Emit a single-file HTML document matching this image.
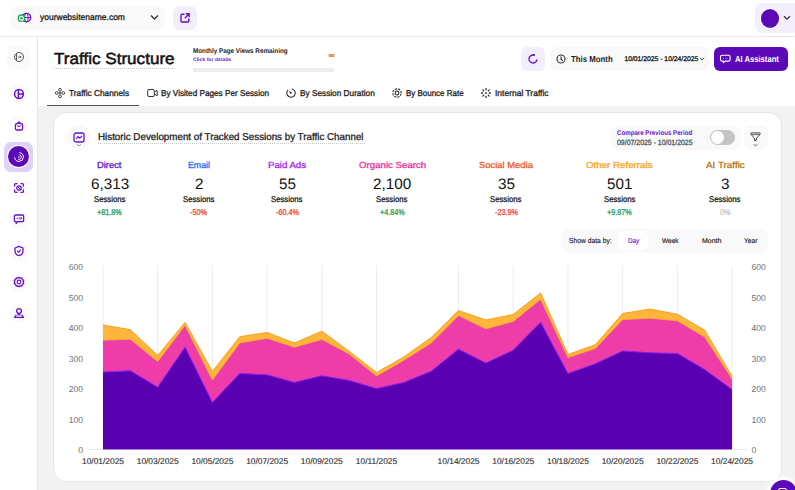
<!DOCTYPE html>
<html><head><meta charset="utf-8">
<style>
*{margin:0;padding:0;box-sizing:border-box}
html,body{width:795px;height:490px;overflow:hidden;background:#fff;font-family:"Liberation Sans",sans-serif;color:#1a1a1a;text-rendering:geometricPrecision}
.a{position:absolute}
.t{position:absolute;white-space:nowrap;line-height:1}
.m{-webkit-text-stroke:0.3px currentColor}
.m2{-webkit-text-stroke:0.15px currentColor}
.m3{-webkit-text-stroke:0.5px currentColor}
</style></head><body>
<!-- top header -->
<div class="a" style="left:0;top:0;width:795px;height:37px;background:#fff;border-bottom:1px solid #e9e9e9"></div>
<div class="a" style="left:10px;top:6px;width:155px;height:24px;border-radius:7px;background:#f9f9f9"></div>
<svg class="a" style="left:17px;top:11px" width="16" height="14" viewBox="0 0 16 14">
 <circle cx="9.4" cy="6.6" r="4.3" fill="#fff" stroke="#6a12c9" stroke-width="1.3"/>
 <ellipse cx="9.4" cy="6.6" rx="1.8" ry="4.3" fill="none" stroke="#6a12c9" stroke-width="1"/>
 <path d="M5.1 6.6H13.7" stroke="#6a12c9" stroke-width="1"/>
 <circle cx="4.4" cy="7.2" r="3.2" fill="#fff" stroke="#1fa85a" stroke-width="1.3"/>
 <circle cx="4.4" cy="7.2" r="1.3" fill="#1fa85a"/>
</svg>
<svg class="a" style="left:150px;top:14px" width="9" height="7" viewBox="0 0 9 7"><path d="M1 1.5L4.5 5L8 1.5" fill="none" stroke="#333" stroke-width="1.4"/></svg>
<div class="a" style="left:173px;top:6px;width:24px;height:24px;border-radius:7px;background:#f3eefc"></div>
<svg class="a" style="left:179px;top:12px" width="12" height="12" viewBox="0 0 12 12"><path d="M5 2.2H3.2A1.2 1.2 0 0 0 2 3.4V8.8A1.2 1.2 0 0 0 3.2 10H8.6A1.2 1.2 0 0 0 9.8 8.8V7M6.2 5.8L10 2M7.2 1.8H10.2V4.8" fill="none" stroke="#6a12c9" stroke-width="1.4" stroke-linecap="round" stroke-linejoin="round"/></svg>
<div class="a" style="left:755px;top:3px;width:45px;height:30px;border-radius:8px;background:#f3eefc"></div>
<div class="a" style="left:759.6px;top:7.8px;width:20.8px;height:20.8px;border-radius:50%;background:#fff"></div>
<div class="a" style="left:760.6px;top:8.8px;width:18.8px;height:18.8px;border-radius:50%;background:#5a0bb5"></div>
<svg class="a" style="left:783px;top:15px" width="8" height="6" viewBox="0 0 8 6"><path d="M1 1.2L4 4.2L7 1.2" fill="none" stroke="#333" stroke-width="1.3"/></svg>

<!-- sidebar -->
<div class="a" style="left:37px;top:36px;width:1px;height:454px;background:#e6e6e6"></div>
<div class="a" style="left:6.5px;top:45.5px;width:24px;height:24px;border-radius:7px;background:#fafafa"></div>
<svg class="a" style="left:13px;top:51.4px" width="12" height="12" viewBox="0 0 12 12"><circle cx="6" cy="6" r="4.5" fill="none" stroke="#555" stroke-width="1"/><path d="M3.55 2.3V9.7" stroke="#555" stroke-width="1"/><path d="M5 6H8.2M6.9 4.8L8.2 6L6.9 7.2" fill="none" stroke="#555" stroke-width=".9"/></svg>
<div class="a" style="left:8.5px;top:83.6px;width:20px;height:20px;border-radius:50%;background:#fafafa"></div>
<svg class="a" style="left:12.5px;top:87.6px" width="12" height="12" viewBox="0 0 12 12"><circle cx="6" cy="6" r="4.4" fill="none" stroke="#6a12c9" stroke-width="1.5"/><path d="M5.4 1.6V10.4M5.4 6H10.4" stroke="#6a12c9" stroke-width="1.5"/></svg>
<div class="a" style="left:8.5px;top:115.7px;width:20px;height:20px;border-radius:50%;background:#fafafa"></div>
<svg class="a" style="left:12.5px;top:119.7px" width="12" height="12" viewBox="0 0 12 12"><path d="M2.4 5.6Q2.4 3.4 4.6 3.3H7.4Q9.6 3.4 9.6 5.6V8.6A1.4 1.4 0 0 1 8.2 10H3.8A1.4 1.4 0 0 1 2.4 8.6Z" fill="none" stroke="#6a12c9" stroke-width="1.3" stroke-linejoin="round"/><path d="M4.9 3.3Q5 1.9 6 1.9Q7 1.9 7.1 3.3M4.6 5.9Q6 6.9 7.4 5.9" fill="none" stroke="#6a12c9" stroke-width="1.1" stroke-linecap="round"/></svg>
<div class="a" style="left:3.5px;top:141.5px;width:29.5px;height:30.5px;border-radius:7px;background:#ded0f7"></div>
<div class="a" style="left:7.3px;top:144.9px;width:23px;height:23px;border-radius:50%;background:#fff"></div>
<div class="a" style="left:8.1px;top:145.70000000000002px;width:21.4px;height:21.4px;border-radius:50%;background:#5c08b8"></div>
<svg class="a" style="left:12.7px;top:150.6px" width="12" height="12" viewBox="0 0 12 12"><path d="M6.76 1.67A4.4 4.4 0 1 1 1.67 6.76M6.82 3.74A2.4 2.4 0 0 1 5.58 8.36" fill="none" stroke="#fff" stroke-width="1" stroke-linecap="round"/><circle cx="5.9" cy="6" r=".75" fill="#fff"/></svg>
<div class="a" style="left:8.5px;top:177.9px;width:20px;height:20px;border-radius:50%;background:#fafafa"></div>
<svg class="a" style="left:12.5px;top:181.9px" width="12" height="12" viewBox="0 0 12 12"><path d="M1.6 4V2.6A1 1 0 0 1 2.6 1.6H4M8 1.6H9.4A1 1 0 0 1 10.4 2.6V4M10.4 8V9.4A1 1 0 0 1 9.4 10.4H8M4 10.4H2.6A1 1 0 0 1 1.6 9.4V8" fill="none" stroke="#6a12c9" stroke-width="1.3" stroke-linecap="round"/><circle cx="6" cy="6" r="2.2" fill="none" stroke="#6a12c9" stroke-width="1.3"/><path d="M5 5L7 7" stroke="#6a12c9" stroke-width="1"/></svg>
<div class="a" style="left:8.5px;top:208.6px;width:20px;height:20px;border-radius:50%;background:#fafafa"></div>
<svg class="a" style="left:12.5px;top:212.6px" width="12" height="12" viewBox="0 0 12 12"><path d="M2.6 2H9.4A1.2 1.2 0 0 1 10.6 3.2V7.4A1.2 1.2 0 0 1 9.4 8.6H5L3.2 10.2V8.6H2.6A1.2 1.2 0 0 1 1.4 7.4V3.2A1.2 1.2 0 0 1 2.6 2Z" fill="none" stroke="#6a12c9" stroke-width="1.3" stroke-linejoin="round"/><path d="M3.6 5.3H5.4M7 4V6.6M8.4 4.4V6.2" stroke="#6a12c9" stroke-width="1"/></svg>
<div class="a" style="left:8.5px;top:241.2px;width:20px;height:20px;border-radius:50%;background:#fafafa"></div>
<svg class="a" style="left:12.5px;top:245.2px" width="12" height="12" viewBox="0 0 12 12"><path d="M6 1.4L10 3V6A5 5 0 0 1 6 10.6A5 5 0 0 1 2 6V3Z" fill="none" stroke="#6a12c9" stroke-width="1.3" stroke-linejoin="round"/><path d="M4.2 5.8L5.6 7.1L7.9 4.7" fill="none" stroke="#6a12c9" stroke-width="1.2"/></svg>
<div class="a" style="left:8.5px;top:272.4px;width:20px;height:20px;border-radius:50%;background:#fafafa"></div>
<svg class="a" style="left:12.5px;top:276.4px" width="12" height="12" viewBox="0 0 12 12"><path d="M6 1.2L7.2 2.2L8.8 2L9.3 3.5L10.7 4.4L10.2 6L10.7 7.6L9.3 8.5L8.8 10L7.2 9.8L6 10.8L4.8 9.8L3.2 10L2.7 8.5L1.3 7.6L1.8 6L1.3 4.4L2.7 3.5L3.2 2L4.8 2.2Z" fill="none" stroke="#6a12c9" stroke-width="1.3" stroke-linejoin="round"/><circle cx="6" cy="6" r="1.8" fill="none" stroke="#6a12c9" stroke-width="1.2"/></svg>
<div class="a" style="left:8.5px;top:303.1px;width:20px;height:20px;border-radius:50%;background:#fafafa"></div>
<svg class="a" style="left:12.5px;top:307.1px" width="12" height="12" viewBox="0 0 12 12"><circle cx="6" cy="4" r="2.4" fill="none" stroke="#6a12c9" stroke-width="1.3"/><path d="M6 6.6L4.6 8.4M6 6.6L7.4 8.4M3.4 7.8L1.6 10.4H10.4L8.6 7.8" fill="none" stroke="#6a12c9" stroke-width="1.3" stroke-linejoin="round"/></svg>

<!-- main gray area -->
<div class="a" style="left:38px;top:106px;width:757px;height:384px;background:#f2f2f2"></div>

<!-- title -->
<div class="a" style="left:54px;top:68px;width:121px;height:0;border-top:1px dotted #c8c8c8"></div>
<div class="a" style="left:193px;top:67.5px;width:141px;height:4.3px;background:#ececec;border-radius:1px"></div>

<!-- right buttons -->
<div class="a" style="left:521px;top:47px;width:24px;height:24px;border-radius:6px;background:#f3eefc"></div>
<svg class="a" style="left:527px;top:53.3px" width="12" height="12" viewBox="0 0 12 12"><path d="M9.9 6.9A4 4 0 1 1 6.69 2.06" fill="none" stroke="#6a12c9" stroke-width="1.4" stroke-linecap="round"/><circle cx="6.9" cy="2.0" r="1.05" fill="#5a0bb8"/></svg>
<div class="a" style="left:550px;top:47px;width:159px;height:24px;border-radius:7px;background:#f9f9f9"></div>
<svg class="a" style="left:556px;top:54px" width="10" height="10" viewBox="0 0 10 10"><circle cx="5" cy="5" r="4" fill="none" stroke="#333" stroke-width="1.1"/><path d="M5 2.8V5.2L6.5 6.5" fill="none" stroke="#333" stroke-width="1.1" stroke-linecap="round"/></svg>
<svg class="a" style="left:699px;top:57px" width="6" height="4" viewBox="0 0 6 4"><path d="M.8 .8L3 3L5.2 .8" fill="none" stroke="#333" stroke-width=".9"/></svg>
<div class="a" style="left:714px;top:47px;width:74px;height:24px;border-radius:6px;background:#5c08b8"></div>
<svg class="a" style="left:719px;top:54px" width="12" height="10" viewBox="0 0 12 10"><path d="M3 1.3H9.6A1.5 1.5 0 0 1 11.1 2.8V5.6A1.5 1.5 0 0 1 9.6 7.1H6.2L4.5 8.6L4.3 7.1H3A1.5 1.5 0 0 1 1.5 5.6V2.8A1.5 1.5 0 0 1 3 1.3Z" fill="none" stroke="#fff" stroke-width="1.1" stroke-linejoin="round"/><circle cx="4.6" cy="4.3" r=".45" fill="#fff"/><circle cx="6.3" cy="4.3" r=".45" fill="#fff"/><circle cx="8" cy="4.3" r=".45" fill="#fff"/></svg>

<!-- tabs -->
<svg class="a" style="left:54.5px;top:88px" width="10" height="10" viewBox="0 0 10 10"><circle cx="5" cy="1.8" r="1.4" fill="none" stroke="#333" stroke-width=".9"/><circle cx="5" cy="8.2" r="1.4" fill="none" stroke="#333" stroke-width=".9"/><circle cx="1.8" cy="5" r="1.4" fill="none" stroke="#333" stroke-width=".9"/><circle cx="8.2" cy="5" r="1.4" fill="none" stroke="#333" stroke-width=".9"/><circle cx="5" cy="5" r="1" fill="#333"/></svg>
<div class="a" style="left:47px;top:104.5px;width:92px;height:1.2px;background:#555"></div>
<svg class="a" style="left:147px;top:88px" width="11" height="10" viewBox="0 0 11 10"><rect x=".7" y="1.5" width="6.6" height="7" rx="1.3" fill="none" stroke="#333" stroke-width="1"/><path d="M7.3 4L10.2 2.4V7.6L7.3 6" fill="none" stroke="#333" stroke-width="1"/></svg>
<svg class="a" style="left:286px;top:88px" width="10" height="10" viewBox="0 0 10 10"><path d="M6.09 .94A4.2 4.2 0 1 1 1.78 2.3" fill="none" stroke="#333" stroke-width="1.1" stroke-linecap="round"/><path d="M3.1 3.1L6.2 4.5L4.5 6.2Z" fill="#333"/></svg>
<svg class="a" style="left:391.5px;top:88px" width="10" height="10" viewBox="0 0 10 10"><circle cx="5" cy="5" r="4.2" fill="none" stroke="#333" stroke-width="1.15" stroke-dasharray="2.3 1" stroke-dashoffset="-0.5"/><circle cx="5" cy="5" r="1.9" fill="none" stroke="#333" stroke-width="1.1"/></svg>
<svg class="a" style="left:480.8px;top:87.8px" width="10" height="10" viewBox="0 0 10 10"><path d="M8.30 5.00L9.40 5.00M7.33 7.33L8.11 8.11M5.00 8.30L5.00 9.40M2.67 7.33L1.89 8.11M1.70 5.00L0.60 5.00M2.67 2.67L1.89 1.89M5.00 1.70L5.00 0.60M7.33 2.67L8.11 1.89" stroke="#333" stroke-width="1.35" stroke-linecap="round"/><circle cx="5" cy="5" r="0.9" fill="#333"/></svg>

<!-- card -->
<div class="a" style="left:53px;top:112px;width:728.5px;height:369.5px;background:#fff;border-radius:13px;border:1px solid #e6e6e6"></div>
<div class="a" style="left:67px;top:125px;width:24px;height:24px;border-radius:50%;background:#f9f9f9"></div>
<svg class="a" style="left:73px;top:132px" width="12" height="16" viewBox="0 0 12 16"><rect x="1" y="1" width="10" height="9" rx="2" fill="none" stroke="#6a12c9" stroke-width="1.3"/><path d="M3 6.8L5 4.6L6.8 6.2L9 3.8" fill="none" stroke="#6a12c9" stroke-width="1.1"/><path d="M4 12.4L6 14L8 12.4" fill="none" stroke="#999" stroke-width="1"/></svg>
<div class="a" style="left:98px;top:143px;width:267px;height:0;border-top:1px dotted #c8c8c8"></div>

<div class="a" style="left:610.5px;top:125.5px;width:130px;height:24.5px;border-radius:7px;background:#f9f9f9"></div>
<div class="a" style="left:710px;top:130px;width:25px;height:15px;border-radius:8px;background:#c4c4c4"></div>
<div class="a" style="left:711px;top:131px;width:13px;height:13px;border-radius:50%;background:#fff"></div>
<div class="a" style="left:744px;top:126px;width:23.5px;height:24px;border-radius:7px;background:#f9f9f9"></div>
<svg class="a" style="left:748px;top:130px" width="16" height="20" viewBox="0 0 16 20"><path d="M3.4 2.9H11.6Q12.6 2.9 12.1 3.9Q10.6 6.6 8.4 8.2V10.2L6.6 10.9V8.2Q4.4 6.6 2.9 3.9Q2.4 2.9 3.4 2.9Z" fill="none" stroke="#222" stroke-width=".85" stroke-linejoin="round"/><path d="M3.9 4.6H11.1" stroke="#222" stroke-width=".7"/><path d="M5.6 14.2L7.5 16.1L9.4 14.2" fill="none" stroke="#555" stroke-width=".9"/></svg>



<!-- show data by -->
<div class="a" style="left:561px;top:228.5px;width:207px;height:24px;border-radius:8px;background:#f9f9f9"></div>
<div class="a" style="left:618px;top:231px;width:30px;height:19px;border-radius:6px;background:#fff"></div>

<svg class="a" style="left:0;top:0" width="795" height="490" viewBox="0 0 795 490">
<line x1="103.00" y1="265.5" x2="103.00" y2="449.5" stroke="#ececec" stroke-width="1"/>
<line x1="157.70" y1="265.5" x2="157.70" y2="449.5" stroke="#ececec" stroke-width="1"/>
<line x1="212.40" y1="265.5" x2="212.40" y2="449.5" stroke="#ececec" stroke-width="1"/>
<line x1="267.10" y1="265.5" x2="267.10" y2="449.5" stroke="#ececec" stroke-width="1"/>
<line x1="321.80" y1="265.5" x2="321.80" y2="449.5" stroke="#ececec" stroke-width="1"/>
<line x1="376.50" y1="265.5" x2="376.50" y2="449.5" stroke="#ececec" stroke-width="1"/>
<line x1="458.55" y1="265.5" x2="458.55" y2="449.5" stroke="#ececec" stroke-width="1"/>
<line x1="513.25" y1="265.5" x2="513.25" y2="449.5" stroke="#ececec" stroke-width="1"/>
<line x1="567.95" y1="265.5" x2="567.95" y2="449.5" stroke="#ececec" stroke-width="1"/>
<line x1="622.65" y1="265.5" x2="622.65" y2="449.5" stroke="#ececec" stroke-width="1"/>
<line x1="677.35" y1="265.5" x2="677.35" y2="449.5" stroke="#ececec" stroke-width="1"/>
<line x1="732.05" y1="265.5" x2="732.05" y2="449.5" stroke="#ececec" stroke-width="1"/>
<line x1="88" y1="449.5" x2="103" y2="449.5" stroke="#ececec" stroke-width="1"/>
<line x1="732" y1="449.5" x2="747" y2="449.5" stroke="#ececec" stroke-width="1"/>
<path d="M103.00,325.00 L130.35,329.70 L157.70,355.50 L185.05,322.40 L212.40,371.50 L239.75,336.70 L267.10,332.50 L294.45,343.00 L321.80,331.20 L349.15,351.30 L376.50,372.50 L403.85,357.00 L431.20,337.50 L458.55,310.60 L485.90,320.00 L513.25,314.50 L540.60,293.00 L567.95,354.50 L595.30,344.80 L622.65,313.50 L650.00,309.10 L677.35,314.30 L704.70,330.20 L732.05,376.50 L732.05,395.50 L704.70,375.50 L677.35,359.50 L650.00,358.80 L622.65,357.00 L595.30,369.80 L567.95,379.50 L540.60,328.30 L513.25,356.20 L485.90,369.10 L458.55,355.20 L431.20,377.20 L403.85,388.50 L376.50,394.60 L349.15,386.40 L321.80,381.80 L294.45,388.40 L267.10,380.80 L239.75,379.50 L212.40,408.50 L185.05,353.10 L157.70,393.20 L130.35,376.80 L103.00,378.10 Z" fill="#fdb53b"/>
<path d="M103.00,340.20 L130.35,339.20 L157.70,361.50 L185.05,325.30 L212.40,380.00 L239.75,342.90 L267.10,338.30 L294.45,347.20 L321.80,339.40 L349.15,353.90 L376.50,376.00 L403.85,360.20 L431.20,343.00 L458.55,315.50 L485.90,328.80 L513.25,321.40 L540.60,299.20 L567.95,357.50 L595.30,348.50 L622.65,319.60 L650.00,318.20 L677.35,320.80 L704.70,336.90 L732.05,379.00 L732.05,395.50 L704.70,375.50 L677.35,359.50 L650.00,358.80 L622.65,357.00 L595.30,369.80 L567.95,379.50 L540.60,328.30 L513.25,356.20 L485.90,369.10 L458.55,355.20 L431.20,377.20 L403.85,388.50 L376.50,394.60 L349.15,386.40 L321.80,381.80 L294.45,388.40 L267.10,380.80 L239.75,379.50 L212.40,408.50 L185.05,353.10 L157.70,393.20 L130.35,376.80 L103.00,378.10 Z" fill="#ee3da8"/>
<path d="M103.00,372.10 L130.35,370.80 L157.70,387.20 L185.05,347.10 L212.40,402.50 L239.75,373.50 L267.10,374.80 L294.45,382.40 L321.80,375.80 L349.15,380.40 L376.50,388.60 L403.85,382.50 L431.20,371.20 L458.55,349.20 L485.90,363.10 L513.25,350.20 L540.60,322.30 L567.95,373.50 L595.30,363.80 L622.65,351.00 L650.00,352.80 L677.35,353.50 L704.70,369.50 L732.05,389.50 L732.05,449.5 L103.00,449.5 Z" fill="#5a02b2"/>
<path d="M103.00,325.00 L130.35,329.70 L157.70,355.50 L185.05,322.40 L212.40,371.50 L239.75,336.70 L267.10,332.50 L294.45,343.00 L321.80,331.20 L349.15,351.30 L376.50,372.50 L403.85,357.00 L431.20,337.50 L458.55,310.60 L485.90,320.00 L513.25,314.50 L540.60,293.00 L567.95,354.50 L595.30,344.80 L622.65,313.50 L650.00,309.10 L677.35,314.30 L704.70,330.20 L732.05,376.50" fill="none" stroke="#f9a01b" stroke-width="1"/>
<path d="M103.00,340.20 L130.35,339.20 L157.70,361.50 L185.05,325.30 L212.40,380.00 L239.75,342.90 L267.10,338.30 L294.45,347.20 L321.80,339.40 L349.15,353.90 L376.50,376.00 L403.85,360.20 L431.20,343.00 L458.55,315.50 L485.90,328.80 L513.25,321.40 L540.60,299.20 L567.95,357.50 L595.30,348.50 L622.65,319.60 L650.00,318.20 L677.35,320.80 L704.70,336.90 L732.05,379.00" fill="none" stroke="#f7b824" stroke-width="0.8"/>
<path d="M103.00,372.10 L130.35,370.80 L157.70,387.20 L185.05,347.10 L212.40,402.50 L239.75,373.50 L267.10,374.80 L294.45,382.40 L321.80,375.80 L349.15,380.40 L376.50,388.60 L403.85,382.50 L431.20,371.20 L458.55,349.20 L485.90,363.10 L513.25,350.20 L540.60,322.30 L567.95,373.50 L595.30,363.80 L622.65,351.00 L650.00,352.80 L677.35,353.50 L704.70,369.50 L732.05,389.50" fill="none" stroke="#8a1cf0" stroke-width="1"/>
</svg>
<div class="t" style="left:83px;top:446.1px;font-size:8.6px;color:#707070;transform:translateX(-100%)">0</div>
<div class="t" style="left:751.5px;top:446.1px;font-size:8.6px;color:#707070">0</div>
<div class="t" style="left:83px;top:415.6px;font-size:8.6px;color:#707070;transform:translateX(-100%)">100</div>
<div class="t" style="left:751.5px;top:415.6px;font-size:8.6px;color:#707070">100</div>
<div class="t" style="left:83px;top:385.2px;font-size:8.6px;color:#707070;transform:translateX(-100%)">200</div>
<div class="t" style="left:751.5px;top:385.2px;font-size:8.6px;color:#707070">200</div>
<div class="t" style="left:83px;top:354.7px;font-size:8.6px;color:#707070;transform:translateX(-100%)">300</div>
<div class="t" style="left:751.5px;top:354.7px;font-size:8.6px;color:#707070">300</div>
<div class="t" style="left:83px;top:324.3px;font-size:8.6px;color:#707070;transform:translateX(-100%)">400</div>
<div class="t" style="left:751.5px;top:324.3px;font-size:8.6px;color:#707070">400</div>
<div class="t" style="left:83px;top:293.8px;font-size:8.6px;color:#707070;transform:translateX(-100%)">500</div>
<div class="t" style="left:751.5px;top:293.8px;font-size:8.6px;color:#707070">500</div>
<div class="t" style="left:83px;top:263.4px;font-size:8.6px;color:#707070;transform:translateX(-100%)">600</div>
<div class="t" style="left:751.5px;top:263.4px;font-size:8.6px;color:#707070">600</div>
<div class="t m2" style="left:103.00px;top:457.3px;font-size:8.4px;color:#333;transform:translateX(-50%)">10/01/2025</div>
<div class="t m2" style="left:157.70px;top:457.3px;font-size:8.4px;color:#333;transform:translateX(-50%)">10/03/2025</div>
<div class="t m2" style="left:212.40px;top:457.3px;font-size:8.4px;color:#333;transform:translateX(-50%)">10/05/2025</div>
<div class="t m2" style="left:267.10px;top:457.3px;font-size:8.4px;color:#333;transform:translateX(-50%)">10/07/2025</div>
<div class="t m2" style="left:321.80px;top:457.3px;font-size:8.4px;color:#333;transform:translateX(-50%)">10/09/2025</div>
<div class="t m2" style="left:376.50px;top:457.3px;font-size:8.4px;color:#333;transform:translateX(-50%)">10/11/2025</div>
<div class="t m2" style="left:458.55px;top:457.3px;font-size:8.4px;color:#333;transform:translateX(-50%)">10/14/2025</div>
<div class="t m2" style="left:513.25px;top:457.3px;font-size:8.4px;color:#333;transform:translateX(-50%)">10/16/2025</div>
<div class="t m2" style="left:567.95px;top:457.3px;font-size:8.4px;color:#333;transform:translateX(-50%)">10/18/2025</div>
<div class="t m2" style="left:622.65px;top:457.3px;font-size:8.4px;color:#333;transform:translateX(-50%)">10/20/2025</div>
<div class="t m2" style="left:677.35px;top:457.3px;font-size:8.4px;color:#333;transform:translateX(-50%)">10/22/2025</div>
<div class="t m2" style="left:732.05px;top:457.3px;font-size:8.4px;color:#333;transform:translateX(-50%)">10/24/2025</div>

<!-- floating chat btn -->
<div class="a" style="left:767px;top:477px;width:32px;height:32px;border-radius:50%;background:#fff;box-shadow:0 0 6px rgba(255,255,255,.9)"></div>
<div class="a" style="left:769.5px;top:479.5px;width:27px;height:27px;border-radius:50%;background:#5c08b8"></div>
<div class="a" style="left:777.5px;top:487.5px;width:9px;height:8px;border-radius:2px;border:1.2px solid #fff"></div>
<div class="t m" style="left:40.48px;top:12.71px;font-size:8.679px;color:#222;transform:scaleX(0.9807);transform-origin:0 0;">yourwebsitename.com</div>
<div class="t m3" style="left:54.00px;top:50.75px;font-size:16.058px;color:#111;transform:scaleX(1.0646);transform-origin:0 0;">Traffic Structure</div>
<div class="t" style="left:192.80px;top:48.61px;font-size:6.861px;color:#222;font-weight:bold;transform:scaleX(0.9204);transform-origin:0 0;">Monthly Page Views Remaining</div>
<div class="t" style="left:192.80px;top:58.84px;font-size:4.964px;color:#6a12c9;font-weight:bold;transform:scaleX(1.0324);transform-origin:0 0;">Click for details</div>
<div class="t" style="left:571.30px;top:54.60px;font-size:8.613px;color:#222;font-weight:bold;transform:scaleX(0.9087);transform-origin:0 0;">This Month</div>
<div class="t m" style="left:624.40px;top:56.83px;font-size:6.799px;color:#222;">10/01/2025 - 10/24/2025</div>
<div class="t" style="left:735.40px;top:54.54px;font-size:8.759px;color:#fff;font-weight:bold;transform:scaleX(0.8725);transform-origin:0 0;">AI Assistant</div>
<div class="t m" style="left:69.20px;top:89.01px;font-size:8.613px;color:#222;transform:scaleX(0.9683);transform-origin:0 0;">Traffic Channels</div>
<div class="t m" style="left:160.70px;top:89.01px;font-size:8.613px;color:#222;transform:scaleX(0.9518);transform-origin:0 0;">By Visited Pages Per Session</div>
<div class="t m" style="left:300.10px;top:89.01px;font-size:8.613px;color:#222;transform:scaleX(0.9603);transform-origin:0 0;">By Session Duration</div>
<div class="t m" style="left:405.60px;top:89.01px;font-size:8.613px;color:#222;transform:scaleX(0.9270);transform-origin:0 0;">By Bounce Rate</div>
<div class="t m" style="left:494.60px;top:89.01px;font-size:8.613px;color:#222;transform:scaleX(0.9873);transform-origin:0 0;">Internal Traffic</div>
<div class="t m" style="left:97.90px;top:133.00px;font-size:9.927px;color:#222;transform:scaleX(0.9888);transform-origin:0 0;">Historic Development of Tracked Sessions by Traffic Channel</div>
<div class="t" style="left:616.70px;top:130.57px;font-size:6.861px;color:#6a12c9;font-weight:bold;transform:scaleX(0.8964);transform-origin:0 0;">Compare Previous Period</div>
<div class="t m" style="left:616.70px;top:138.53px;font-size:7.507px;color:#555;transform:scaleX(0.9244);transform-origin:0 0;">09/07/2025 - 10/01/2025</div>
<div class="t m" style="left:97.20px;top:160.75px;font-size:8.905px;color:#5f0fd0;transform:scaleX(1.0542);transform-origin:0 0;">Direct</div>
<div class="t" style="left:90.60px;top:176.62px;font-size:15.156px;color:#111;transform:scaleX(1.0079);transform-origin:0 0;">6,313</div>
<div class="t m" style="left:93.80px;top:194.95px;font-size:8.467px;color:#222;transform:scaleX(0.9171);transform-origin:0 0;">Sessions</div>
<div class="t m" style="left:97.40px;top:207.53px;font-size:8.357px;color:#1e9e5a;transform:scaleX(0.8621);transform-origin:0 0;">+81.8%</div>
<div class="t m" style="left:187.70px;top:160.75px;font-size:8.905px;color:#1d6ff5;transform:scaleX(0.9870);transform-origin:0 0;">Email</div>
<div class="t" style="left:195.02px;top:176.62px;font-size:15.156px;color:#111;transform:scaleX(1.0079);transform-origin:0 0;">2</div>
<div class="t m" style="left:183.00px;top:194.95px;font-size:8.467px;color:#222;transform:scaleX(0.9171);transform-origin:0 0;">Sessions</div>
<div class="t m" style="left:190.43px;top:207.53px;font-size:8.357px;color:#ee4433;transform:scaleX(0.8621);transform-origin:0 0;">-50%</div>
<div class="t m" style="left:267.70px;top:160.75px;font-size:8.905px;color:#a51ff0;transform:scaleX(1.0833);transform-origin:0 0;">Paid Ads</div>
<div class="t" style="left:278.63px;top:176.62px;font-size:15.156px;color:#111;transform:scaleX(1.0079);transform-origin:0 0;">55</div>
<div class="t m" style="left:271.15px;top:194.95px;font-size:8.467px;color:#222;transform:scaleX(0.9171);transform-origin:0 0;">Sessions</div>
<div class="t m" style="left:275.56px;top:207.53px;font-size:8.357px;color:#ee4433;transform:scaleX(0.8621);transform-origin:0 0;">-60.4%</div>
<div class="t m" style="left:358.70px;top:160.75px;font-size:8.905px;color:#e9339a;transform:scaleX(1.0887);transform-origin:0 0;">Organic Search</div>
<div class="t" style="left:373.30px;top:176.62px;font-size:15.156px;color:#111;transform:scaleX(1.0079);transform-origin:0 0;">2,100</div>
<div class="t m" style="left:376.40px;top:194.95px;font-size:8.467px;color:#222;transform:scaleX(0.9171);transform-origin:0 0;">Sessions</div>
<div class="t m" style="left:379.95px;top:207.53px;font-size:8.357px;color:#1e9e5a;transform:scaleX(0.8621);transform-origin:0 0;">+4.84%</div>
<div class="t m" style="left:478.90px;top:160.75px;font-size:8.905px;color:#f05a1e;transform:scaleX(1.0596);transform-origin:0 0;">Social Media</div>
<div class="t" style="left:497.88px;top:176.62px;font-size:15.156px;color:#111;transform:scaleX(1.0079);transform-origin:0 0;">35</div>
<div class="t m" style="left:490.40px;top:194.95px;font-size:8.467px;color:#222;transform:scaleX(0.9171);transform-origin:0 0;">Sessions</div>
<div class="t m" style="left:494.81px;top:207.53px;font-size:8.357px;color:#ee4433;transform:scaleX(0.8621);transform-origin:0 0;">-23.9%</div>
<div class="t m" style="left:586.40px;top:160.75px;font-size:8.905px;color:#f5a623;transform:scaleX(1.0951);transform-origin:0 0;">Other Referrals</div>
<div class="t" style="left:607.20px;top:176.62px;font-size:15.156px;color:#111;transform:scaleX(1.0079);transform-origin:0 0;">501</div>
<div class="t m" style="left:603.75px;top:194.95px;font-size:8.467px;color:#222;transform:scaleX(0.9171);transform-origin:0 0;">Sessions</div>
<div class="t m" style="left:607.30px;top:207.53px;font-size:8.357px;color:#1e9e5a;transform:scaleX(0.8621);transform-origin:0 0;">+9.87%</div>
<div class="t m" style="left:706.00px;top:160.75px;font-size:8.905px;color:#b8770e;transform:scaleX(1.1114);transform-origin:0 0;">AI Traffic</div>
<div class="t" style="left:721.42px;top:176.62px;font-size:15.156px;color:#111;transform:scaleX(1.0079);transform-origin:0 0;">3</div>
<div class="t m" style="left:709.40px;top:194.95px;font-size:8.467px;color:#222;transform:scaleX(0.9171);transform-origin:0 0;">Sessions</div>
<div class="t m" style="left:719.85px;top:207.53px;font-size:8.357px;color:#c8c8c8;transform:scaleX(0.8621);transform-origin:0 0;">0%</div>
<div class="t m2" style="left:569.30px;top:237.51px;font-size:7.153px;color:#222;transform:scaleX(0.9422);transform-origin:0 0;">Show data by:</div>
<div class="t m2" style="left:627.50px;top:238.74px;font-size:6.861px;color:#6a12c9;transform:scaleX(0.9154);transform-origin:0 0;">Day</div>
<div class="t m2" style="left:661.50px;top:238.74px;font-size:6.861px;color:#222;transform:scaleX(0.9556);transform-origin:0 0;">Week</div>
<div class="t m2" style="left:701.70px;top:238.74px;font-size:6.861px;color:#222;transform:scaleX(1.0158);transform-origin:0 0;">Month</div>
<div class="t m2" style="left:744.00px;top:238.74px;font-size:6.861px;color:#222;transform:scaleX(0.9643);transform-origin:0 0;">Year</div>
<svg class="a" style="left:327.5px;top:52.5px" width="7" height="5" viewBox="0 0 7 5"><path d="M3.5 2.5C2.6 1.3 1.2 1 .9 2.5C1.2 4 2.6 3.7 3.5 2.5C4.4 1.3 5.8 1 6.1 2.5C5.8 4 4.4 3.7 3.5 2.5Z" fill="none" stroke="#f26b1d" stroke-width="1.1"/></svg>
</body></html>
